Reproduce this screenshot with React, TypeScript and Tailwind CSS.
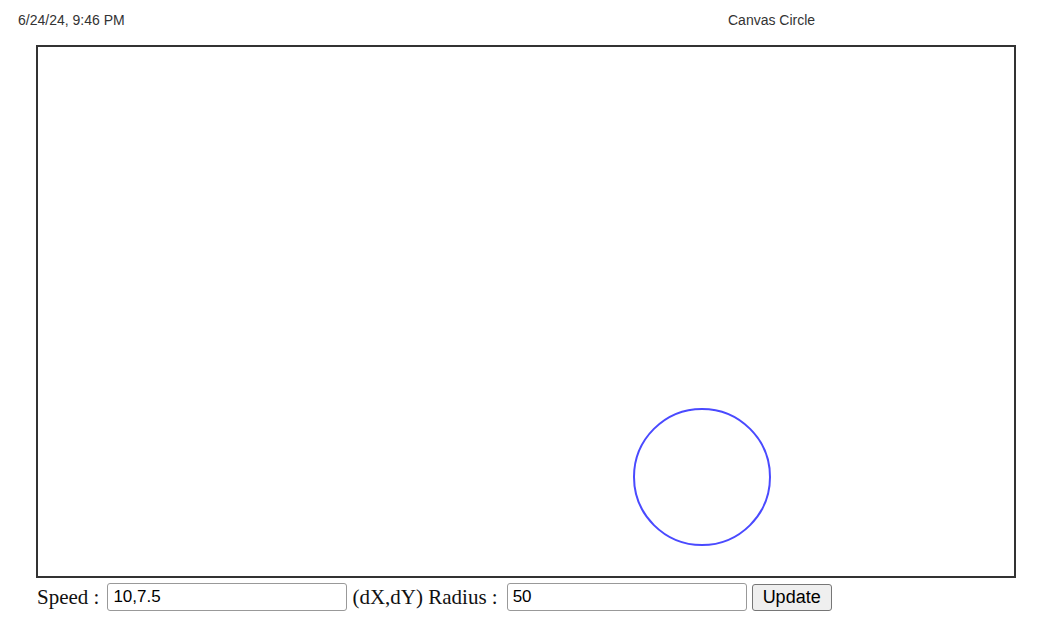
import React from "react";

export default function App() {
  return (
    <div className="w-[1059px] h-[640px] bg-white relative" style={{ fontFamily: '"Liberation Serif", serif' }}>
      <div className="flex h-[38px] items-start pt-[10px] text-[14px] text-[#333]" style={{ fontFamily: '"Liberation Sans", Arial, sans-serif' }}>
        <div className="pl-[18px] w-[728px]">6/24/24, 9:46 PM</div>
        <div>Canvas Circle</div>
      </div>
      <div className="ml-[36px] mt-[7px] w-[980px] h-[533px] border-2 border-[#333] relative">
        <svg width="976" height="529" className="block">
          <circle cx="664" cy="430" r="68" fill="none" stroke="#4a4aff" strokeWidth="2" />
        </svg>
      </div>
      <div className="ml-[37px] mt-[5px] flex items-center text-[21px] text-[#111] leading-none">
        <span>Speed :</span>
        <input
          defaultValue="10,7.5"
          className="ml-[8px] w-[240px] h-[28px] border border-[#999] rounded-[3px] px-[5px] text-[17px] text-black"
          style={{ fontFamily: '"Liberation Sans", Arial, sans-serif' }}
        />
        <span className="ml-[5px]">(dX,dY) Radius :</span>
        <input
          defaultValue="50"
          className="ml-[9px] w-[240px] h-[28px] border border-[#999] rounded-[3px] px-[5px] text-[17px] text-black"
          style={{ fontFamily: '"Liberation Sans", Arial, sans-serif' }}
        />
        <button
          className="ml-[5px] w-[80px] h-[27px] border border-[#767676] rounded-[3px] bg-[#efefef] text-[18px] text-black"
          style={{ fontFamily: '"Liberation Sans", Arial, sans-serif' }}
        >
          Update
        </button>
      </div>
    </div>
  );
}
